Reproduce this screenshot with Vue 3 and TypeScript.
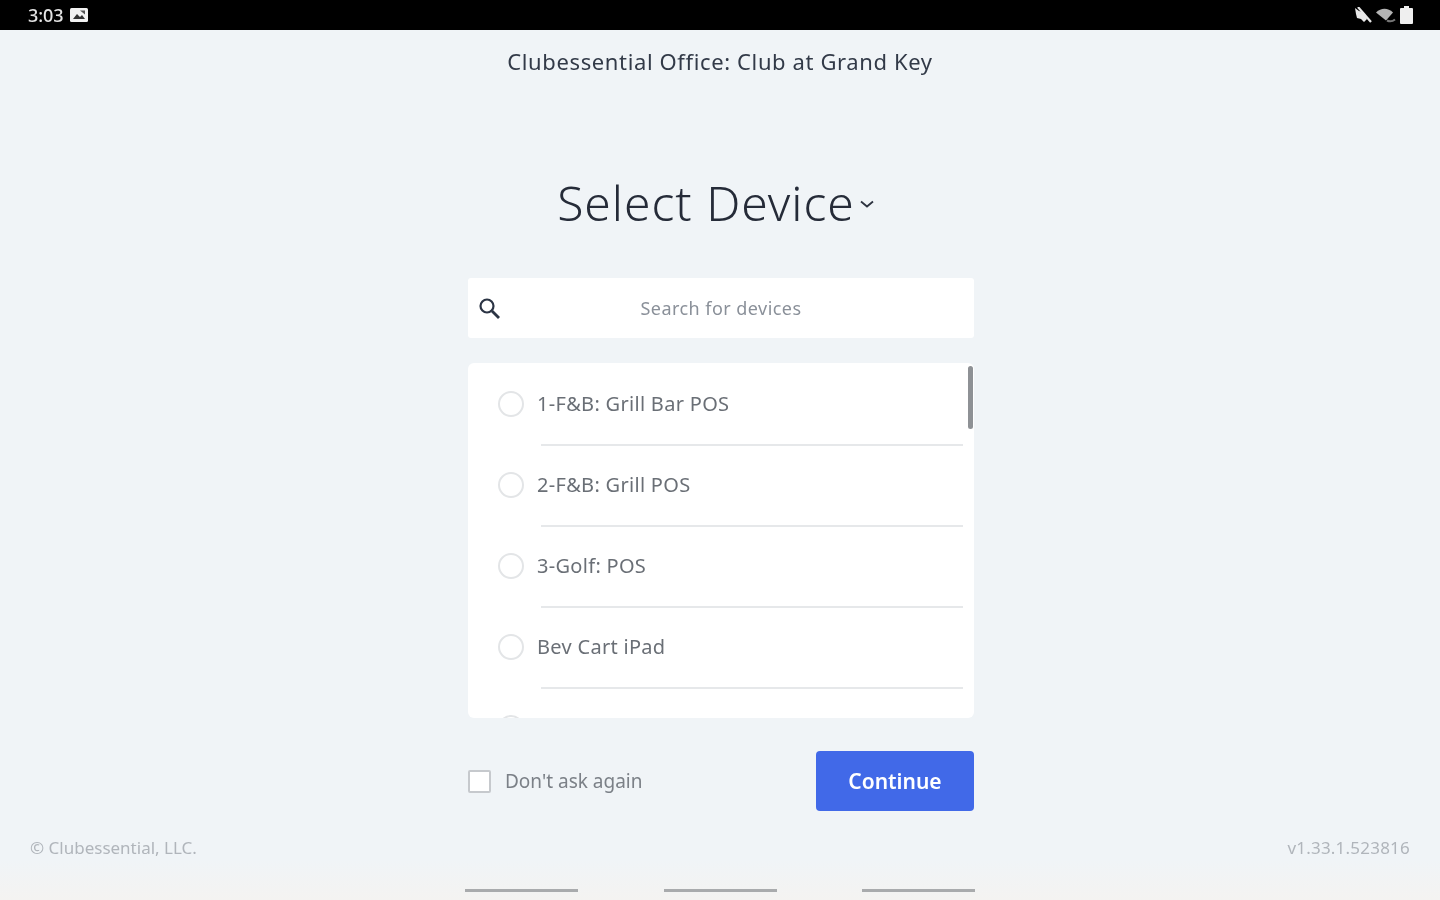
<script setup lang="ts">
const devices: string[] = ['1-F&B: Grill Bar POS', '2-F&B: Grill POS', '3-Golf: POS', 'Bev Cart iPad', '']
</script>

<template>
  <div class="page">
    <header class="status">
      <div class="status-left">
        <span class="time">3:03</span>
        <svg class="pic" width="18" height="14" viewBox="0 0 18 14">
          <rect x="0" y="0" width="18" height="14" rx="1.500" fill="#f2f2f2" />
          <path d="M3 11l4-5 3 3 2-2 3 4z" fill="#333" />
          <path d="M10 2.500h5v4z" fill="#555" />
        </svg>
      </div>
      <div class="status-right">
        <svg width="18" height="17" viewBox="0 0 18 17">
          <path d="M1 1l4 3 4 1 3 4 1 3-3 3-3-3-4-1-1-4z" fill="#e8e8e8" />
          <path d="M4 0l13 15" stroke="#e8e8e8" stroke-width="2.200" />
        </svg>
        <svg width="22" height="15" viewBox="0 0 22 15">
          <path d="M1 4.500c5-5 12-5 17 0l-7 8z" fill="#b4b4b4" />
          <path d="M12 12.500c3 1.500 5 1.500 8-1" fill="none" stroke="#777" stroke-width="2" />
        </svg>
        <svg width="13" height="18" viewBox="0 0 13 18">
          <path d="M4 0h5v2h3a1 1 0 0 1 1 1v14a1 1 0 0 1-1 1H1a1 1 0 0 1-1-1V3a1 1 0 0 1 1-1h3z" fill="#efefef" />
        </svg>
      </div>
    </header>

    <div class="club">Clubessential Office: Club at Grand Key</div>

    <h1 class="heading">
      Select Device<svg class="caret" width="18" height="10" viewBox="0 0 18 10">
        <path d="M3 2.500L9 7.500l6-5" fill="none" stroke="#2d3340" stroke-width="1.800" />
      </svg>
    </h1>

    <div class="column">
      <div class="search">
        <svg class="search-icon" width="24" height="24" viewBox="0 0 24 24">
          <circle cx="10" cy="10" r="6.500" fill="none" stroke="#2b3444" stroke-width="2.200" />
          <path d="M15 15l7 7" stroke="#2b3444" stroke-width="2.800" />
        </svg>
        <span class="placeholder">Search for devices</span>
      </div>

      <div class="list">
        <div v-for="(d, i) in devices" :key="i" class="row">
          <span class="radio"></span>
          <span class="label">{{ d }}</span>
        </div>
        <span class="thumb"></span>
      </div>

      <div class="actions">
        <label class="ask">
          <span class="check"></span>
          <span>Don't ask again</span>
        </label>
        <button class="continue">Continue</button>
      </div>
    </div>

    <footer class="legal">
      <span>© Clubessential, LLC.</span>
      <span class="version">v1.33.1.523816</span>
    </footer>

    <div class="nav">
      <span class="bar"></span>
      <span class="bar"></span>
      <span class="bar"></span>
    </div>
  </div>
</template>

<style>
html, body { margin: 0; background: #f0f4f8; }
</style>

<style scoped>
.page {
  height: 900px;
  overflow: hidden;
  display: flex;
  flex-direction: column;
  background: linear-gradient(#f0f4f7 860px, #f4f3f1 900px);
  font-family: "Noto Sans", "Open Sans", sans-serif;
  filter: blur(0.5px);
}
.status {
  height: 30px;
  flex: none;
  background: #000;
  display: flex;
  align-items: center;
  justify-content: space-between;
  padding: 0 27px 0 28px;
  box-sizing: border-box;
}
.status-left { display: flex; align-items: center; gap: 7px; }
.status-right { display: flex; align-items: center; gap: 3px; }
.time { color: #e4e4e4; font-size: 18px; font-weight: 500; letter-spacing: -0.1px; }
.pic { display: block; }
.club {
  margin-top: 16px;
  height: 31px;
  line-height: 31px;
  text-align: center;
  color: #323a48;
  font-size: 22px;
  letter-spacing: 0.62px;
}
.heading {
  margin: 92px 0 0;
  padding-right: 7px;
  height: 68px;
  line-height: 68px;
  text-align: center;
  font-size: 48px;
  font-weight: 300;
  letter-spacing: 1px;
  color: #252b38;
  white-space: nowrap;
}
.caret { margin-left: 3px; vertical-align: 12px; }
.column {
  width: 506px;
  margin: 41px 0 0 468px;
  display: flex;
  flex-direction: column;
}
.search {
  position: relative;
  height: 60px;
  background: #fff;
  border-radius: 3px;
  display: flex;
  align-items: center;
  justify-content: center;
}
.search-icon { position: absolute; left: 9px; top: 18px; }
.placeholder { color: #8a9099; font-size: 18px; letter-spacing: 0.45px; }
.list {
  position: relative;
  margin-top: 25px;
  height: 355px;
  background: #fff;
  border-radius: 6px;
  overflow: hidden;
}
.row {
  height: 81px;
  box-sizing: border-box;
  display: flex;
  align-items: center;
  gap: 13px;
  padding-left: 30px;
  position: relative;
}
.row::after {
  content: "";
  position: absolute;
  left: 73px;
  right: 11px;
  bottom: -2px;
  height: 2px;
  background: #e6e8ea;
}
.radio {
  width: 22px;
  height: 22px;
  border: 2px solid #e3e5e7;
  border-radius: 50%;
  flex: none;
}
.label { color: #6a6f76; font-size: 20px; letter-spacing: 0.3px; }
.thumb {
  position: absolute;
  right: 1px;
  top: 3px;
  width: 5px;
  height: 63px;
  border-radius: 3px;
  background: #8e9195;
}
.actions {
  margin-top: 33px;
  height: 60px;
  display: flex;
  align-items: center;
  justify-content: space-between;
}
.ask { display: flex; align-items: center; gap: 14px; color: #7b8087; font-size: 19px; }
.check {
  width: 19px;
  height: 19px;
  background: #fff;
  border: 2px solid #c6c9cd;
  border-radius: 2px;
}
.continue {
  width: 158px;
  height: 60px;
  border: none;
  border-radius: 4px;
  background: #4169e8;
  color: #fff;
  font-family: inherit;
  font-size: 21px;
  font-weight: 600;
}
.legal {
  margin-top: 25px;
  padding: 0 30px;
  height: 24px;
  line-height: 24px;
  display: flex;
  justify-content: space-between;
  color: #b0b5bb;
  font-size: 17px;
}
.version { letter-spacing: 0.22px; }
.nav {
  margin-top: 29px;
  margin-left: 465px;
  width: 510px;
  display: flex;
  justify-content: space-between;
}
.bar { width: 113px; height: 3px; background: #a9abad; }
</style>
